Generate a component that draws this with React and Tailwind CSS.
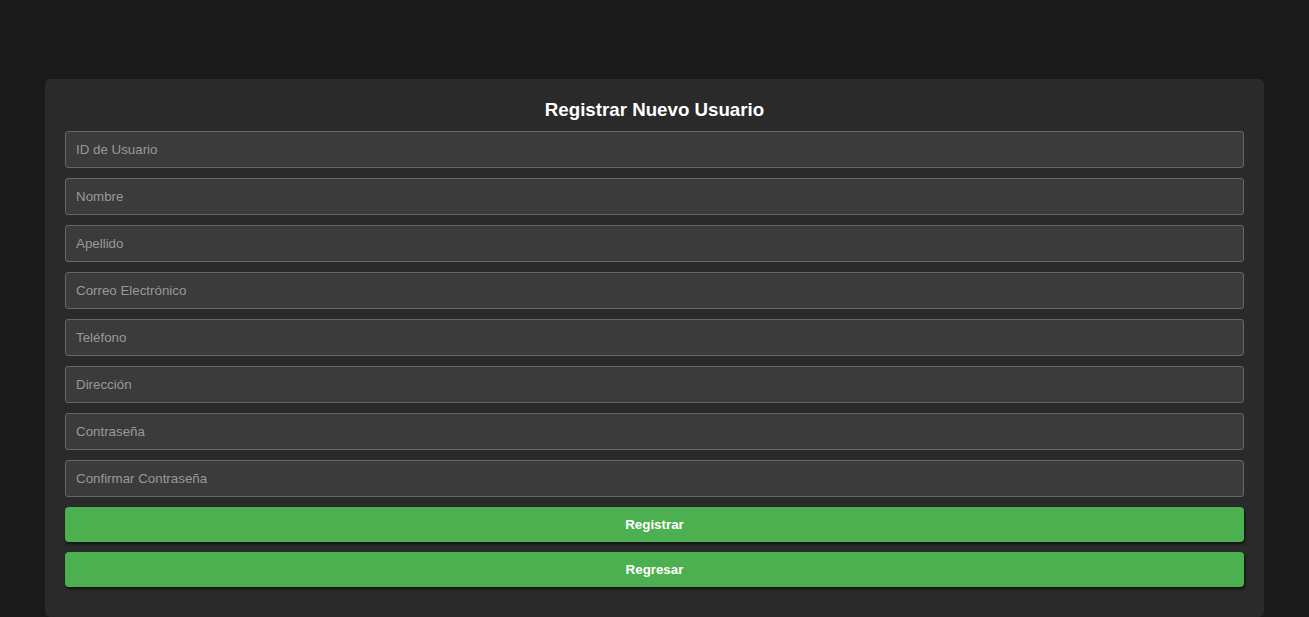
import React from 'react';

const FIELDS = [
    { name: 'id', placeholder: 'ID de Usuario', type: 'text' },
    { name: 'nombre', placeholder: 'Nombre', type: 'text' },
    { name: 'apellido', placeholder: 'Apellido', type: 'text' },
    { name: 'correo', placeholder: 'Correo Electrónico', type: 'email' },
    { name: 'telefono', placeholder: 'Teléfono', type: 'tel' },
    { name: 'direccion', placeholder: 'Dirección', type: 'text' },
    { name: 'password', placeholder: 'Contraseña', type: 'password' },
    { name: 'confirm', placeholder: 'Confirmar Contraseña', type: 'password' },
];

const App = () => (
    <div className="min-h-screen bg-[#1a1a1a] px-[45px] pt-[79px] font-['Liberation_Sans',Arial,sans-serif]">
        <div className="bg-[#2a2a2a] rounded-[5px] px-5 pt-5 pb-[30px]">
            <h2 className="text-white text-[18.72px] font-bold text-center leading-[21px] mb-[11px]">
                Registrar Nuevo Usuario</h2>
            <div className="flex flex-col gap-[10px]">
                {FIELDS.map(f => (
                    <input key={f.name} type={f.type} placeholder={f.placeholder}
                        className="h-[37px] w-full bg-[#3b3b3b] border border-[#666] rounded-[3px] px-[10px] pb-[1px] text-[13.33px] text-white placeholder:text-[#999] outline-none font-['Liberation_Sans',Arial,sans-serif]" />
                ))}
                <button className="h-[35px] w-full bg-[#4caf50] text-white text-[13.33px] font-bold rounded-[4px] shadow-[1px_2px_3px_rgba(0,0,0,0.6)]">
                    Registrar</button>
                <button className="h-[35px] w-full bg-[#4caf50] text-white text-[13.33px] font-bold rounded-[4px] shadow-[1px_2px_3px_rgba(0,0,0,0.6)]">
                    Regresar</button>
            </div>
        </div>
    </div>
);

export default App;
